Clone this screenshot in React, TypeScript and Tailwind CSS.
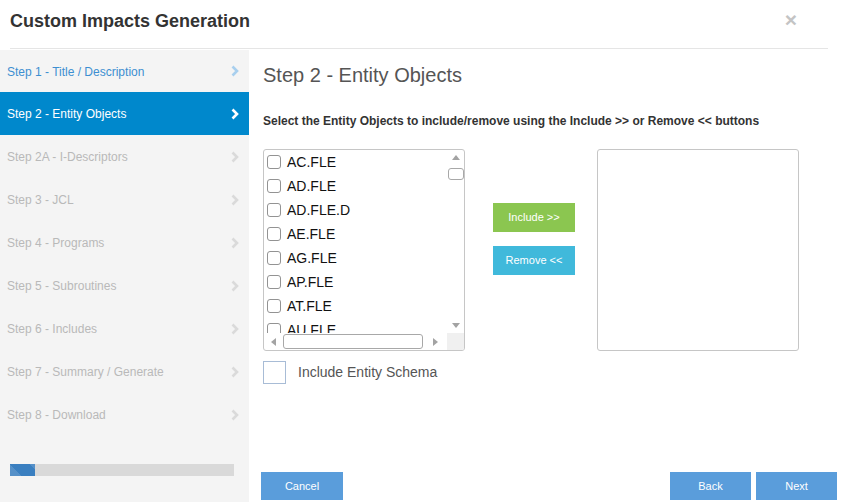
const steps = [
  { label: "Step 1 - Title / Description", state: "done" },
  { label: "Step 2 - Entity Objects", state: "active" },
  { label: "Step 2A - I-Descriptors", state: "off" },
  { label: "Step 3 - JCL", state: "off" },
  { label: "Step 4 - Programs", state: "off" },
  { label: "Step 5 - Subroutines", state: "off" },
  { label: "Step 6 - Includes", state: "off" },
  { label: "Step 7 - Summary / Generate", state: "off" },
  { label: "Step 8 - Download", state: "off" },
];

const entities = ["AC.FLE", "AD.FLE", "AD.FLE.D", "AE.FLE", "AG.FLE", "AP.FLE", "AT.FLE", "AU.FLE"];

function Chevron({ color }: { color: string }) {
  return (
    <svg width="10" height="12" viewBox="0 0 10 12">
      <path d="M2.5 1.5 L7 6 L2.5 10.5" fill="none" stroke={color} strokeWidth="2.6" />
    </svg>
  );
}

function Arrow({ dir }: { dir: "up" | "down" | "left" | "right" }) {
  const pts = {
    up: "0,5 4,0 8,5",
    down: "0,0 8,0 4,5",
    left: "5,0 5,8 0,4",
    right: "0,0 0,8 5,4",
  }[dir];
  const w = dir === "up" || dir === "down" ? 8 : 5;
  const h = dir === "up" || dir === "down" ? 5 : 8;
  return (
    <svg width={w} height={h} viewBox={`0 0 ${w} ${h}`}>
      <polygon points={pts} fill="#a3a3a3" />
    </svg>
  );
}

function EntityList() {
  return (
    <div className="w-[202px] h-[202px] border border-[#c6c6c6] rounded-[3px] flex flex-col overflow-hidden bg-white">
      <div className="flex flex-1 min-h-0">
        <div className="flex-1 overflow-hidden">
          {entities.map((e) => (
            <div key={e} className="h-[24px] flex items-center pl-[3px]">
              <span className="w-[14px] h-[14px] border border-[#939393] rounded-[3px] bg-white shrink-0" />
              <span className="ml-[6px] text-[14px] text-[#111]">{e}</span>
            </div>
          ))}
        </div>
        <div className="w-[17px] flex flex-col items-center">
          <div className="h-[15px] flex items-center justify-center">
            <Arrow dir="up" />
          </div>
          <div className="w-[16px] h-[12px] border border-[#a8a8a8] rounded-[3px] bg-white mt-[3px]" />
          <div className="flex-1" />
          <div className="h-[15px] flex items-center justify-center">
            <Arrow dir="down" />
          </div>
        </div>
      </div>
      <div className="h-[17px] flex">
        <div className="flex-1 flex items-center">
          <div className="w-[19px] flex justify-center">
            <Arrow dir="left" />
          </div>
          <div className="w-[140px] h-[15px] border border-[#a8a8a8] rounded-[3px] bg-white" />
          <div className="flex-1 flex justify-center">
            <Arrow dir="right" />
          </div>
        </div>
        <div className="w-[17px] bg-[#f0f0f0]" />
      </div>
    </div>
  );
}

export default function App() {
  return (
    <div className="w-[842px] h-[502px] bg-white overflow-hidden flex flex-col font-['Liberation_Sans',Arial,sans-serif]">
      <div className="h-[50px] shrink-0 pl-[10px] pr-[14px]">
        <div className="h-[49px] border-b border-[#e5e5e5] flex items-center justify-between">
          <h1 className="text-[18px] font-bold text-[#333] -mt-[6px]">Custom Impacts Generation</h1>
          <span className="text-[21px] font-bold text-[#c4c4c4] mr-[31px] -mt-[9px]">×</span>
        </div>
      </div>

      <div className="flex flex-1 min-h-0">
        <aside className="w-[249px] bg-[#f4f4f4] flex flex-col">
          {steps.map((s, i) => (
            <div
              key={s.label}
              className={
                (i === 0 ? "h-[42px] " : "h-[43px] ") +
                "flex items-center justify-between pl-[7px] pr-[9px] text-[12px] " +
                (s.state === "active"
                  ? "bg-[#0088cc] text-white"
                  : s.state === "done"
                  ? "text-[#3d8fd1]"
                  : "text-[#b9b9b9]")
              }
            >
              <span className="mt-[1px]">{s.label}</span>
              <Chevron color={s.state === "active" ? "#ffffff" : s.state === "done" ? "#a8cfee" : "#dadada"} />
            </div>
          ))}
          <div className="mt-[28px] ml-[10px] w-[224px] h-[12px] bg-[#d9d9d9]">
            <div className="w-[25px] h-full bg-[linear-gradient(45deg,#3a7fc0_25%,#5590c8_25%,#5590c8_50%,#3a7fc0_50%,#3a7fc0_75%,#5590c8_75%)] bg-[length:40px_40px]" />
          </div>
        </aside>

        <main className="flex-1 flex flex-col pl-[14px] pr-[5px]">
          <h2 className="text-[20px] text-[#555] mt-[13px] leading-[24px]">Step 2 - Entity Objects</h2>
          <p className="text-[12px] font-bold text-[#333] mt-[27px] leading-[14px]">
            Select the Entity Objects to include/remove using the Include &gt;&gt; or Remove &lt;&lt; buttons
          </p>

          <div className="flex mt-[21px]">
            <EntityList />
            <div className="w-[132px] flex flex-col pl-[28px] pt-[54px] gap-[14px]">
              <button className="w-[82px] h-[29px] bg-[#8bc650] text-white text-[11px]">Include &gt;&gt;</button>
              <button className="w-[82px] h-[29px] bg-[#40b9db] text-white text-[11px]">Remove &lt;&lt;</button>
            </div>
            <div className="w-[202px] h-[202px] border border-[#c6c6c6] rounded-[3px]" />
          </div>

          <label className="flex items-center mt-[10px]">
            <span className="w-[23px] h-[23px] border border-[#a8bcd6] bg-white" />
            <span className="ml-[12px] text-[14px] text-[#555]">Include Entity Schema</span>
          </label>

          <div className="flex-1" />

          <div className="flex items-center pb-[2px]">
            <button className="w-[82px] h-[28px] bg-[#5a9ddb] text-white text-[11px] ml-[-2px]">Cancel</button>
            <div className="flex-1" />
            <button className="w-[81px] h-[28px] bg-[#5a9ddb] text-white text-[11px]">Back</button>
            <button className="w-[81px] h-[28px] bg-[#5a9ddb] text-white text-[11px] ml-[5px]">Next</button>
          </div>
        </main>
      </div>
    </div>
  );
}
